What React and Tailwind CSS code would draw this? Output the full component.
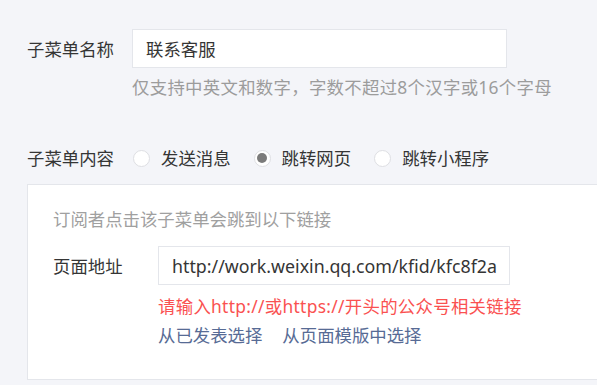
import React from 'react';

const FONT = { fontFamily: '"Noto Sans", "Noto Sans CJK SC", sans-serif' };

function Radio({ checked, label }) {
  return (
    <label className="flex items-center gap-[11px] mr-[23px]">
      <span className="w-[17px] h-[17px] rounded-full border border-[#dedfe3] bg-white flex items-center justify-center">
        {checked && <span className="w-[10px] h-[10px] rounded-full bg-[#7b7b7b]" />}
      </span>
      <span className="text-[#353535]">{label}</span>
    </label>
  );
}

export default function App() {
  return (
    <div
      className="w-[597px] h-[385px] overflow-hidden bg-[#f4f5f9] pl-[27px] pt-[29px] text-[17.4px] leading-[24px]"
      style={FONT}
    >
      <div className="flex items-center">
        <span className="w-[105px] text-[#353535]">子菜单名称</span>
        <div className="w-[375px] h-[39px] border border-[#e4e6eb] bg-white flex items-center pl-[13px] text-[#353535]">
          联系客服
        </div>
      </div>
      <div className="ml-[105px] mt-[7px] text-[#9c9c9c] tracking-[0.3px]">仅支持中英文和数字，字数不超过8个汉字或16个字母</div>

      <div className="flex items-center mt-[47px]">
        <span className="w-[106px] text-[#353535]">子菜单内容</span>
        <Radio label="发送消息" />
        <Radio checked label="跳转网页" />
        <Radio label="跳转小程序" />
      </div>

      <div className="mt-[14px] w-[600px] h-[196px] border border-[#e4e6eb] bg-white pl-[25px] pt-[22px]">
        <div className="text-[#a0a0a0]">订阅者点击该子菜单会跳到以下链接</div>
        <div className="flex items-center mt-[15px]">
          <span className="w-[105px] text-[#353535]">页面地址</span>
          <div className="w-[352px] h-[39px] border border-[#e4e6eb] bg-white flex items-center pl-[13px] text-[#353535] text-[17.8px] overflow-hidden whitespace-nowrap">
            http://work.weixin.qq.com/kfid/kfc8f2a
          </div>
        </div>
        <div className="ml-[105px] mt-[9px] text-[#fa5151] tracking-[0.3px]">请输入http://或https://开头的公众号相关链接</div>
        <div className="ml-[105px] mt-[5px] flex gap-[20px] text-[#576b95]">
          <span>从已发表选择</span>
          <span>从页面模版中选择</span>
        </div>
      </div>
    </div>
  );
}
